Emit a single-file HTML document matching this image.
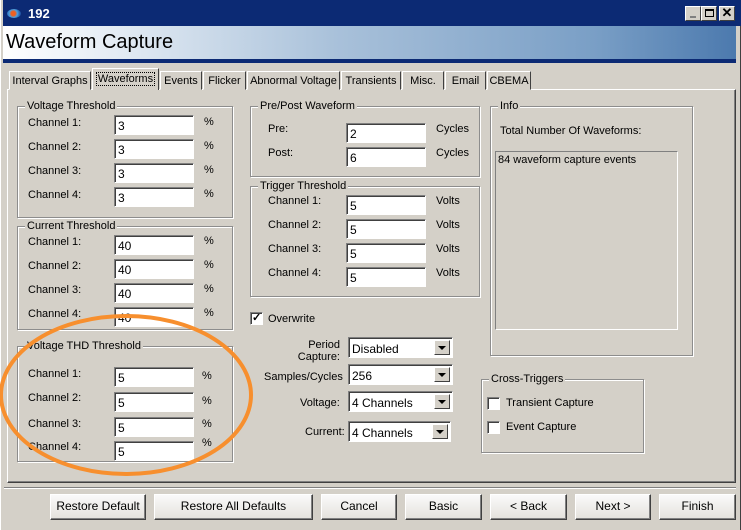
<!DOCTYPE html>
<html><head><meta charset="utf-8"><style>
*{margin:0;padding:0;box-sizing:border-box}
body{width:741px;height:530px;overflow:hidden;background:#d4d0c8;font-family:"Liberation Sans",sans-serif;font-size:11px;color:#000;position:relative}
.a{position:absolute}
.g{position:absolute;border:1px solid #8d8d8d;box-shadow:inset 1px 1px #fff,1px 1px #fff}
.gt{position:absolute;top:-8px;left:7px;background:#d4d0c8;padding:0 2px;line-height:14px}
.in{position:absolute;width:80px;height:20px;background:#fff;border:1px solid;border-color:#808080 #fff #fff #808080;box-shadow:inset 1px 1px #404040;padding:3px 0 0 3px;font-size:12px}
.lb{position:absolute}
.dd{position:absolute;width:105px;height:21px;background:#fff;border:1px solid;border-color:#808080 #fff #fff #808080;box-shadow:inset 1px 1px #404040;padding:4px 0 0 3px;font-size:12px}
.dd i{position:absolute;right:2px;top:2px;width:16px;height:15px;background:#d4d0c8;border:1px solid;border-color:#fff #404040 #404040 #fff}
.dd i:after{content:"";position:absolute;left:3px;top:5px;border-left:4px solid transparent;border-right:4px solid transparent;border-top:4px solid #000}
.btn{position:absolute;top:494px;height:26px;background:linear-gradient(#fafafa,#e4e2dc);border:1px solid;border-color:#fff #404040 #404040 #fff;box-shadow:inset -1px -1px #808080;text-align:center;line-height:23px;font-size:12px}
.tab{position:absolute;top:71px;height:19px;border:1px solid;border-color:#fff #404040 transparent #fff;padding-top:3px;text-align:center;background:#d4d0c8;white-space:nowrap}
.cb{position:absolute;width:13px;height:13px;background:#fff;border:1px solid;border-color:#808080 #fff #fff #808080;box-shadow:inset 1px 1px #404040}
</style></head><body>
<div class="a" style="left:0;top:0;width:741px;height:26px;background:#0c2a74"></div>
<div class="a" style="left:7px;top:9px;width:14px;height:9px;border-radius:50%;background:radial-gradient(circle at 45% 50%,#f06020 25%,#4aa0e0 45%,#2050a0 80%)"></div>
<div class="a" style="left:28px;top:6px;color:#fff;font-weight:bold;font-size:13px">192</div>
<div class="a" style="left:685px;top:6px;width:16px;height:15px;background:#d4d0c8;border:1px solid;border-color:#fff #404040 #404040 #fff"><div class="a" style="left:4px;top:9px;width:6px;height:2px;background:#808080"></div></div>
<div class="a" style="left:701px;top:6px;width:16px;height:15px;background:#d4d0c8;border:1px solid;border-color:#fff #404040 #404040 #fff"><div class="a" style="left:3px;top:2px;width:9px;height:8px;border:1px solid #000;border-top-width:2px"></div></div>
<div class="a" style="left:719px;top:6px;width:16px;height:15px;background:#d4d0c8;border:1px solid;border-color:#fff #404040 #404040 #fff;font-weight:bold;font-size:13px;line-height:12px;text-align:center">✕</div>
<div class="a" style="left:3px;top:26px;width:738px;height:33px;background:linear-gradient(90deg,#fff 0%,#e4ecf4 15%,#a9c1da 45%,#7a9fc6 80%,#4a78ad 100%)"></div>
<div class="a" style="left:6px;top:31px;font-size:20px">Waveform Capture</div>
<div class="a" style="left:3px;top:59px;width:738px;height:4px;background:#0c2a74"></div>
<div class="a" style="left:0;top:0;width:3px;height:530px;background:#d4d0c8;border-left:1px solid #fff"></div>
<div class="a" style="left:736px;top:26px;width:5px;height:504px;background:#d4d0c8;border-right:1px solid #404040"></div>
<!-- panel -->
<div class="a" style="left:7px;top:89px;width:729px;height:394px;border:1px solid;border-color:#fff #404040 #404040 #fff;box-shadow:inset -1px -1px #808080"></div>
<div class="tab" style="left:9px;width:82px">Interval Graphs</div>
<div class="tab" style="left:92px;width:67px;top:68px;height:22px;border-bottom:none;z-index:2;padding-top:4px"><span style="outline:1px dotted #000;padding:0 1px">Waveforms</span></div>
<div class="tab" style="left:160px;width:42px">Events</div>
<div class="tab" style="left:203px;width:43px">Flicker</div>
<div class="tab" style="left:247px;width:93px">Abnormal Voltage</div>
<div class="tab" style="left:341px;width:60px">Transients</div>
<div class="tab" style="left:402px;width:42px">Misc.</div>
<div class="tab" style="left:445px;width:41px">Email</div>
<div class="tab" style="left:487px;width:44px">CBEMA</div>
<!-- voltage threshold -->
<div class="g" style="left:17px;top:106px;width:216px;height:112px"><div class="gt">Voltage Threshold</div></div>
<div class="lb" style="left:28px;top:117px">Channel 1:</div><div class="in" style="left:114px;top:115px">3</div><div class="lb" style="left:204px;top:116px">%</div>
<div class="lb" style="left:28px;top:141px">Channel 2:</div><div class="in" style="left:114px;top:139px">3</div><div class="lb" style="left:204px;top:140px">%</div>
<div class="lb" style="left:28px;top:165px">Channel 3:</div><div class="in" style="left:114px;top:163px">3</div><div class="lb" style="left:204px;top:164px">%</div>
<div class="lb" style="left:28px;top:189px">Channel 4:</div><div class="in" style="left:114px;top:187px">3</div><div class="lb" style="left:204px;top:188px">%</div>
<!-- current -->
<div class="g" style="left:17px;top:226px;width:216px;height:104px"><div class="gt">Current Threshold</div></div>
<div class="lb" style="left:28px;top:236px">Channel 1:</div><div class="in" style="left:114px;top:235px">40</div><div class="lb" style="left:204px;top:235px">%</div>
<div class="lb" style="left:28px;top:260px">Channel 2:</div><div class="in" style="left:114px;top:259px">40</div><div class="lb" style="left:204px;top:259px">%</div>
<div class="lb" style="left:28px;top:284px">Channel 3:</div><div class="in" style="left:114px;top:283px">40</div><div class="lb" style="left:204px;top:283px">%</div>
<div class="lb" style="left:28px;top:308px">Channel 4:</div><div class="in" style="left:114px;top:307px">40</div><div class="lb" style="left:204px;top:307px">%</div>
<!-- THD -->
<div class="g" style="left:17px;top:346px;width:216px;height:116px"><div class="gt">Voltage THD Threshold</div></div>
<div class="lb" style="left:28px;top:368px">Channel 1:</div><div class="in" style="left:114px;top:367px">5</div><div class="lb" style="left:202px;top:370px">%</div>
<div class="lb" style="left:28px;top:392px">Channel 2:</div><div class="in" style="left:114px;top:392px">5</div><div class="lb" style="left:202px;top:395px">%</div>
<div class="lb" style="left:28px;top:418px">Channel 3:</div><div class="in" style="left:114px;top:417px">5</div><div class="lb" style="left:202px;top:418px">%</div>
<div class="lb" style="left:28px;top:441px">Channel 4:</div><div class="in" style="left:114px;top:441px">5</div><div class="lb" style="left:202px;top:437px">%</div>
<!-- pre/post -->
<div class="g" style="left:250px;top:106px;width:230px;height:71px"><div class="gt">Pre/Post Waveform</div></div>
<div class="lb" style="left:268px;top:123px">Pre:</div><div class="in" style="left:346px;top:123px">2</div><div class="lb" style="left:436px;top:123px">Cycles</div>
<div class="lb" style="left:268px;top:147px">Post:</div><div class="in" style="left:346px;top:147px">6</div><div class="lb" style="left:436px;top:147px">Cycles</div>
<!-- trigger -->
<div class="g" style="left:250px;top:186px;width:230px;height:111px"><div class="gt">Trigger Threshold</div></div>
<div class="lb" style="left:268px;top:195px">Channel 1:</div><div class="in" style="left:346px;top:195px">5</div><div class="lb" style="left:436px;top:195px">Volts</div>
<div class="lb" style="left:268px;top:219px">Channel 2:</div><div class="in" style="left:346px;top:219px">5</div><div class="lb" style="left:436px;top:219px">Volts</div>
<div class="lb" style="left:268px;top:243px">Channel 3:</div><div class="in" style="left:346px;top:243px">5</div><div class="lb" style="left:436px;top:243px">Volts</div>
<div class="lb" style="left:268px;top:267px">Channel 4:</div><div class="in" style="left:346px;top:267px">5</div><div class="lb" style="left:436px;top:267px">Volts</div>
<!-- overwrite -->
<div class="cb" style="left:250px;top:312px"><div class="a" style="left:1px;top:-2px;font-size:11px;font-weight:bold">✓</div></div>
<div class="lb" style="left:268px;top:313px">Overwrite</div>
<div class="lb" style="left:290px;top:339px;text-align:right;line-height:12px;width:50px">Period<br>Capture:</div>
<div class="dd" style="left:348px;top:337px">Disabled<i></i></div>
<div class="lb" style="left:264px;top:371px">Samples/Cycles</div>
<div class="dd" style="left:348px;top:364px">256<i></i></div>
<div class="lb" style="left:300px;top:397px">Voltage:</div>
<div class="dd" style="left:348px;top:391px">4 Channels<i></i></div>
<div class="lb" style="left:305px;top:426px">Current:</div>
<div class="dd" style="left:348px;top:421px;width:103px">4 Channels<i></i></div>
<!-- info -->
<div class="g" style="left:490px;top:106px;width:203px;height:250px"><div class="gt">Info</div></div>
<div class="lb" style="left:500px;top:125px">Total Number Of Waveforms:</div>
<div class="a" style="left:495px;top:151px;width:183px;height:179px;border:1px solid;border-color:#808080 #fff #fff #808080;padding:2px 0 0 2px">84 waveform capture events</div>
<!-- cross -->
<div class="g" style="left:481px;top:379px;width:163px;height:74px"><div class="gt">Cross-Triggers</div></div>
<div class="cb" style="left:487px;top:397px"></div><div class="lb" style="left:506px;top:397px">Transient Capture</div>
<div class="cb" style="left:487px;top:421px"></div><div class="lb" style="left:506px;top:421px">Event Capture</div>
<!-- separator -->
<div class="a" style="left:4px;top:487px;width:732px;height:2px;border-top:1px solid #808080;border-bottom:1px solid #fff"></div>
<div class="btn" style="left:50px;width:96px">Restore Default</div>
<div class="btn" style="left:154px;width:159px">Restore All Defaults</div>
<div class="btn" style="left:321px;width:76px">Cancel</div>
<div class="btn" style="left:405px;width:77px">Basic</div>
<div class="btn" style="left:490px;width:77px">&lt; Back</div>
<div class="btn" style="left:575px;width:76px">Next &gt;</div>
<div class="btn" style="left:659px;width:77px">Finish</div>
<svg class="a" style="left:0;top:0" width="741" height="530"><ellipse cx="126" cy="395" rx="125" ry="79" fill="none" stroke="#f78f2e" stroke-width="4"/></svg>
</body></html>
